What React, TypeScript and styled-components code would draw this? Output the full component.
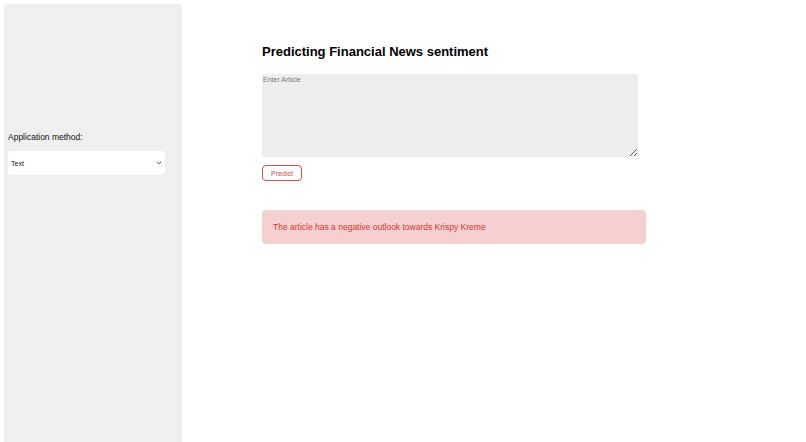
import styled, { createGlobalStyle } from "styled-components";

const GlobalStyle = createGlobalStyle`
  html, body {
    margin: 0;
    padding: 0;
    background: #ffffff;
    font-family: "Liberation Sans", Arial, sans-serif;
    overflow: hidden;
  }
`;

const Page = styled.div`
  display: flex;
  height: 442px;
  padding: 4px 0 0 4px;
  box-sizing: border-box;
`;

const Sidebar = styled.aside`
  width: 178px;
  height: 460px;
  flex-shrink: 0;
  background: #efefef;
  border-radius: 4px 4px 0 0;
  padding: 128px 17px 0 4px;
  box-sizing: border-box;
`;

const FieldLabel = styled.label`
  display: block;
  font-size: 8.5px;
  line-height: 11px;
  color: #111;
  margin-bottom: 8px;
`;

const SelectBox = styled.div`
  display: flex;
  align-items: center;
  justify-content: space-between;
  height: 24px;
  background: #ffffff;
  border-radius: 4px;
  padding: 0 3px;
  font-size: 7px;
  color: #111;
`;

const Main = styled.main`
  flex: 1;
  padding: 40px 0 0 80px;
`;

const Title = styled.h1`
  margin: 0 0 15px;
  font-size: 13px;
  line-height: 15px;
  font-weight: bold;
  color: #000;
`;

const ArticleInput = styled.textarea`
  display: block;
  width: 376px;
  height: 83px;
  box-sizing: border-box;
  border: none;
  border-radius: 2px;
  background: #eeeeee;
  padding: 2px 1px;
  font-family: "Liberation Sans", Arial, sans-serif;
  font-size: 7px;
  color: #333;
  outline: none;

  &::placeholder {
    color: #777;
  }
`;

const PredictButton = styled.button`
  display: block;
  margin-top: 8px;
  width: 40px;
  height: 16px;
  padding: 0;
  background: #ffffff;
  border: 1.5px solid #c9514b;
  border-radius: 4px;
  font-family: "Liberation Sans", Arial, sans-serif;
  font-size: 7px;
  color: #d4453e;
`;

const Alert = styled.div`
  margin-top: 29px;
  width: 384px;
  height: 34px;
  box-sizing: border-box;
  background: #f6d0d0;
  border-radius: 4px;
  padding: 0 11px;
  display: flex;
  align-items: center;
  font-size: 8.5px;
  color: #d9352b;
`;

export default function App() {
  return (
    <>
      <GlobalStyle />
      <Page>
        <Sidebar>
          <FieldLabel>Application method:</FieldLabel>
          <SelectBox>
            <span>Text</span>
            <svg width="6" height="4" viewBox="0 0 6 4">
              <path d="M0.6 0.6 L3 3 L5.4 0.6" fill="none" stroke="#555" strokeWidth="0.9" />
            </svg>
          </SelectBox>
        </Sidebar>
        <Main>
          <Title>Predicting Financial News sentiment</Title>
          <ArticleInput placeholder="Enter Article" />
          <PredictButton>Predict</PredictButton>
          <Alert>The article has a negative outlook towards Krispy Kreme</Alert>
        </Main>
      </Page>
    </>
  );
}
